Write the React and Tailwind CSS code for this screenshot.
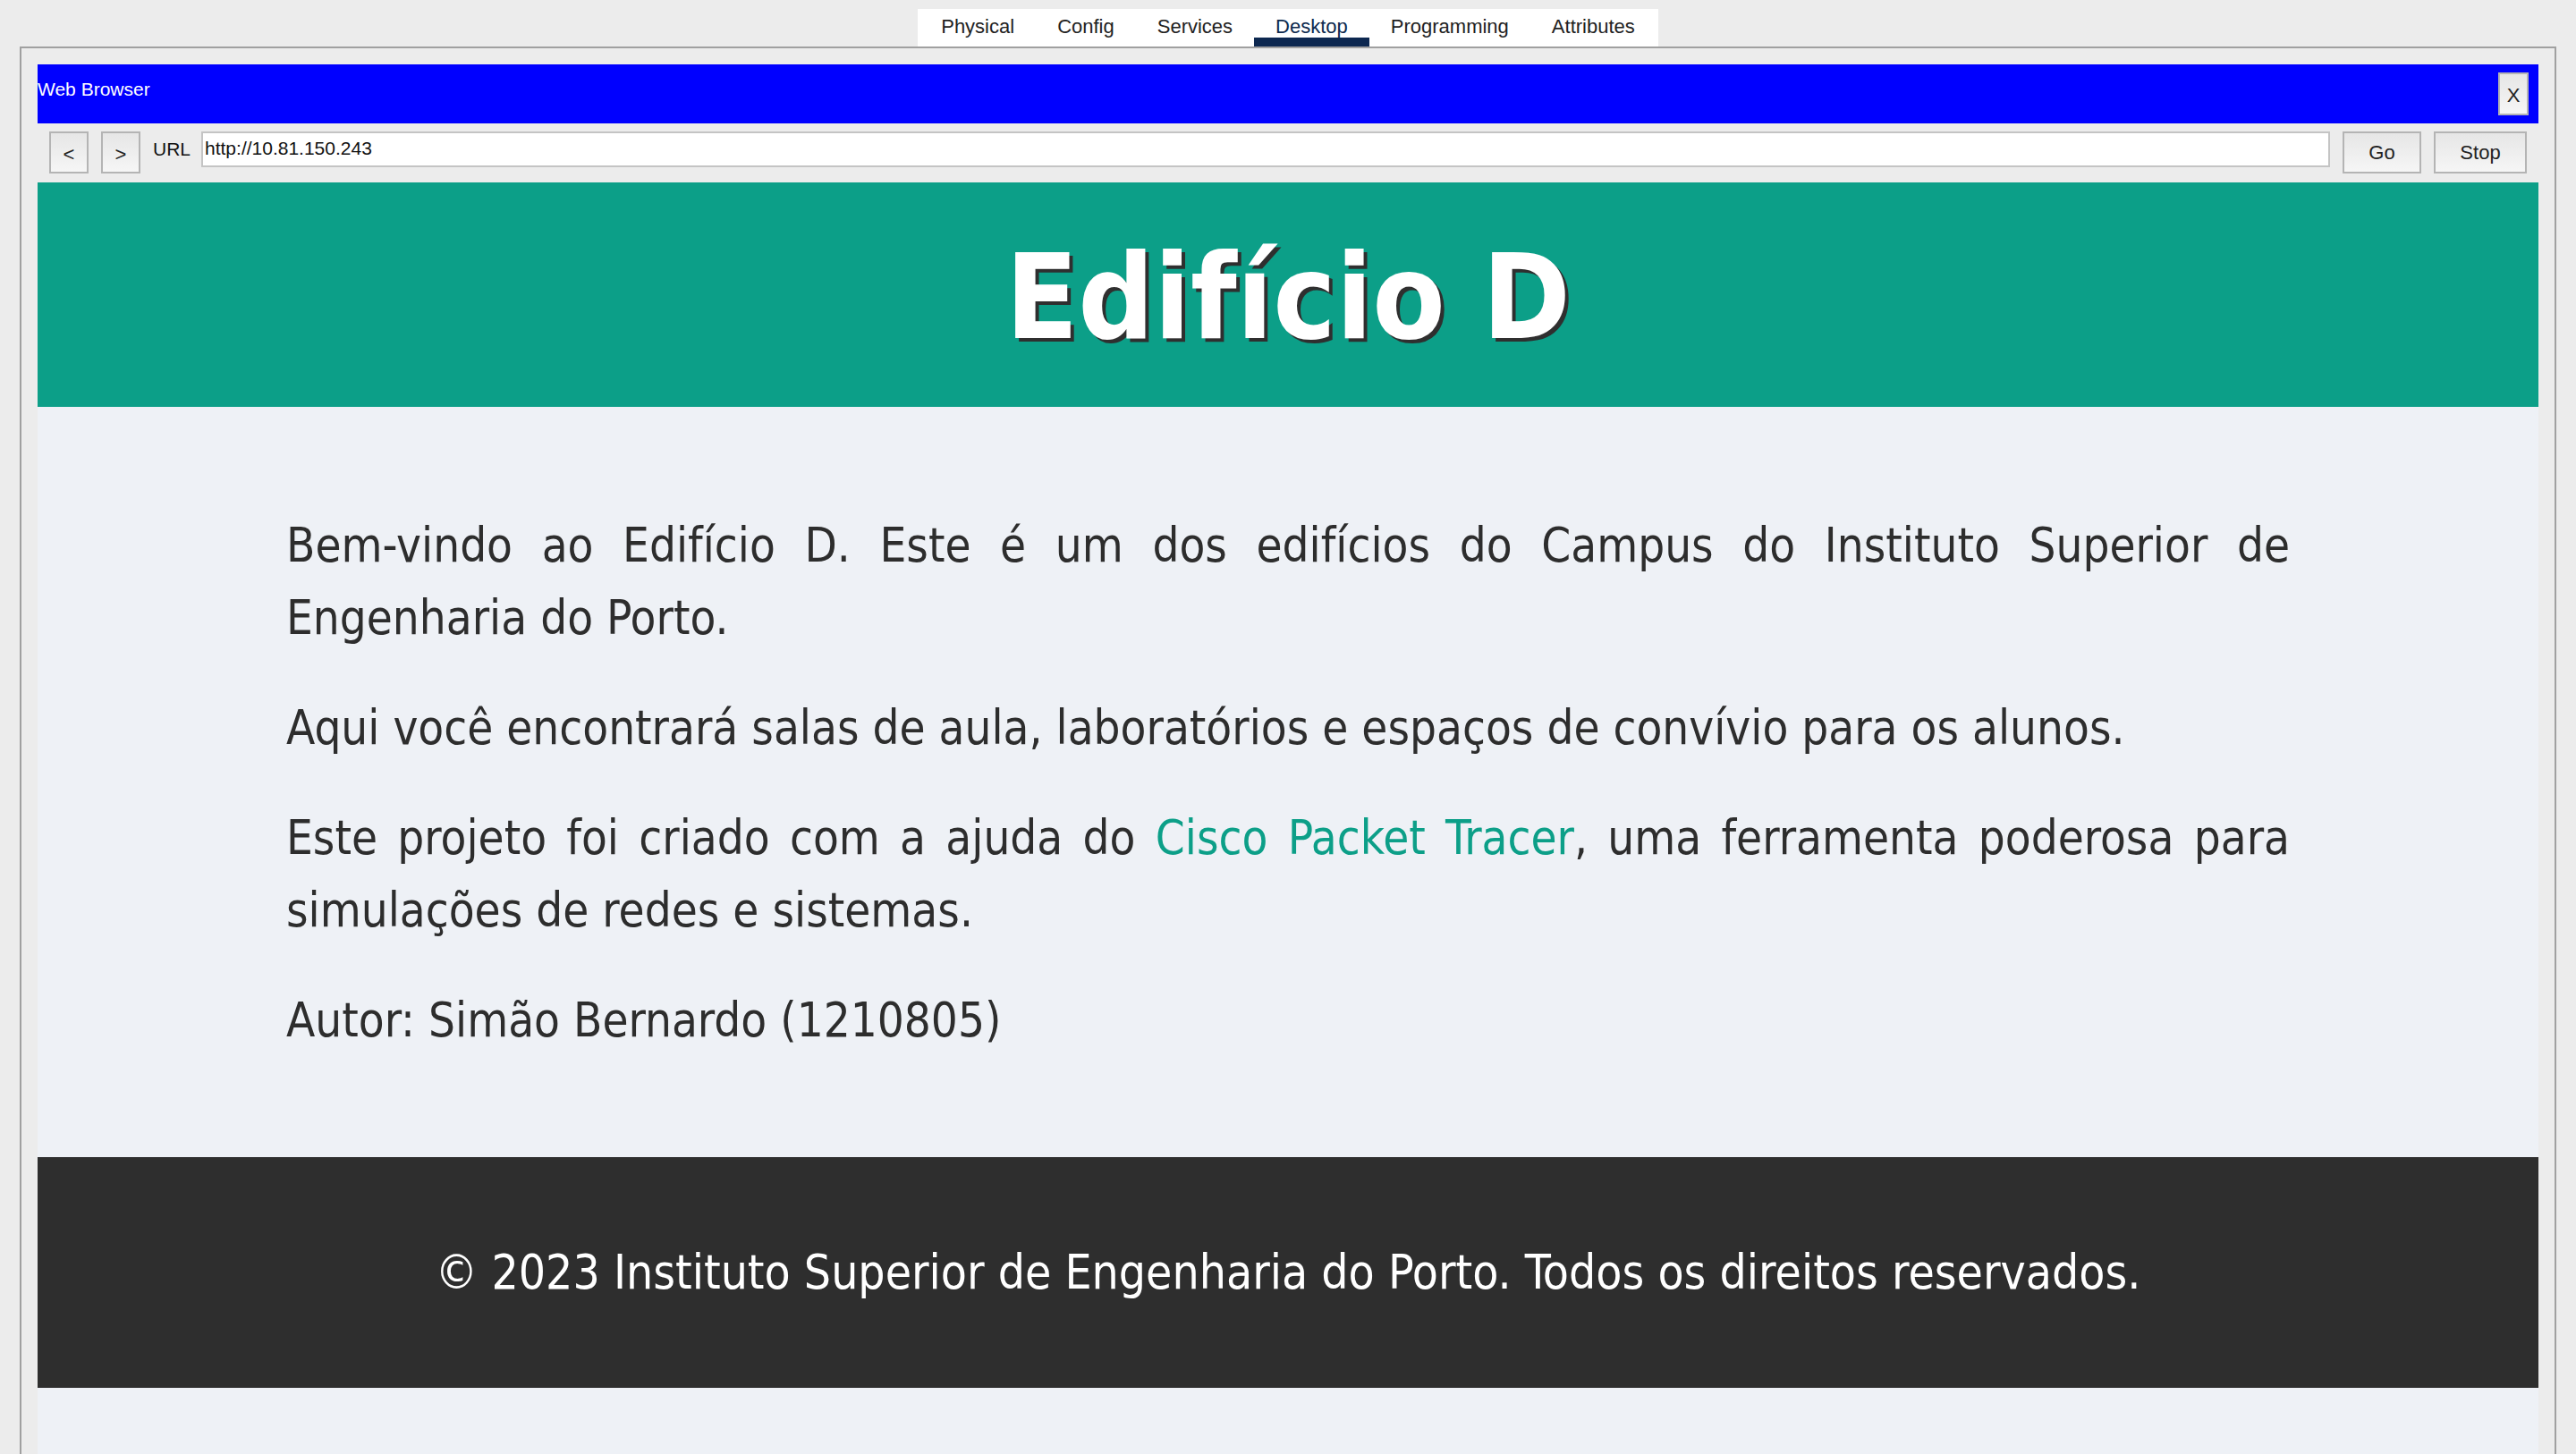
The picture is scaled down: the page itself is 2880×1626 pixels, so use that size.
import React from 'react';

const tabs = ['Physical', 'Config', 'Services', 'Desktop', 'Programming', 'Attributes'];

const ui = { fontFamily: '"Liberation Sans", Arial, sans-serif' };
const page = { fontFamily: '"DejaVu Sans Condensed", "DejaVu Sans", sans-serif', fontStretch: 'condensed' };

const GrayButton = ({ children, className = '' }) => (
  <button
    className={`flex items-center justify-center border-2 border-[#b4b4b4] bg-gradient-to-b from-[#e6e6e6] to-[#f6f6f6] text-[22px] text-[#222] ${className}`}
    style={ui}
  >
    {children}
  </button>
);

const TabBar = () => (
  <div className="flex justify-center pt-[10px]">
    <div className="flex h-[42px] bg-white px-[2px]" style={ui}>
      {tabs.map((t) => (
        <div key={t} className="relative flex items-start px-[24px] pt-[3px] text-[22px] text-[#222]">
          <span className={t === 'Desktop' ? 'text-[#0d2a4e]' : ''}>{t}</span>
          {t === 'Desktop' && <div className="absolute bottom-0 left-0 right-0 h-[10px] bg-[#0d2850]" />}
        </div>
      ))}
    </div>
  </div>
);

const Toolbar = () => (
  <div className="flex h-[66px] items-stretch gap-[14px] px-[13px] pt-[9px] pb-[10px]" style={ui}>
    <GrayButton className="w-[44px] pt-[4px]">&lt;</GrayButton>
    <GrayButton className="w-[44px] pt-[4px]">&gt;</GrayButton>
    <span className="pt-[4px] text-[21px] text-[#111]">URL</span>
    <div className="-ml-[2px] mb-[7px] flex flex-1 items-center border-2 border-[#c4c4c4] bg-white px-[2px] pb-[2px] text-[21px] text-[#111]">
      http://10.81.150.243
    </div>
    <GrayButton className="w-[88px]">Go</GrayButton>
    <GrayButton className="w-[104px]">Stop</GrayButton>
  </div>
);

const WebPage = () => (
  <div className="bg-[#eef1f6] pb-[74px]" style={page}>
    <header className="flex h-[251px] items-center justify-center bg-[#0c9f88]">
      <h1 className="pt-[4px] text-[132px] font-bold leading-none text-white [text-shadow:4px_4px_0_#2f2f2f]">Edifício D</h1>
    </header>

    <main className="mx-auto w-[2240px] space-y-[42px] pt-[114px] pb-[113px] text-justify text-[52.5px] leading-[81px] text-[#2d2d2d]">
      <p>
        Bem-vindo ao Edifício D. Este é um dos edifícios do Campus do Instituto Superior de Engenharia do Porto.
      </p>
      <p>Aqui você encontrará salas de aula, laboratórios e espaços de convívio para os alunos.</p>
      <p>
        Este projeto foi criado com a ajuda do <span className="text-[#0c9f88]">Cisco Packet Tracer</span>, uma
        ferramenta poderosa para simulações de redes e sistemas.
      </p>
      <p>Autor: Simão Bernardo (1210805)</p>
    </main>

    <footer className="flex h-[258px] items-center justify-center bg-[#2e2e2e] text-[53px] text-white">
      © 2023 Instituto Superior de Engenharia do Porto. Todos os direitos reservados.
    </footer>
  </div>
);

export default function App() {
  return (
    <div className="h-[1626px] overflow-hidden bg-[#ececec]">
      <TabBar />
      <div className="mx-[22px] border-l-2 border-r-2 border-t-2 border-[#a0a0a0] px-[18px] pt-[18px]">
        <div className="flex h-[66px] items-center justify-between bg-[#0000ff] pr-[11px]" style={ui}>
          <span className="-mt-[10px] text-[21px] text-white">Web Browser</span>
          <GrayButton className="h-[48px] w-[34px] pt-[2px]">X</GrayButton>
        </div>
        <Toolbar />
        <WebPage />
      </div>
    </div>
  );
}
